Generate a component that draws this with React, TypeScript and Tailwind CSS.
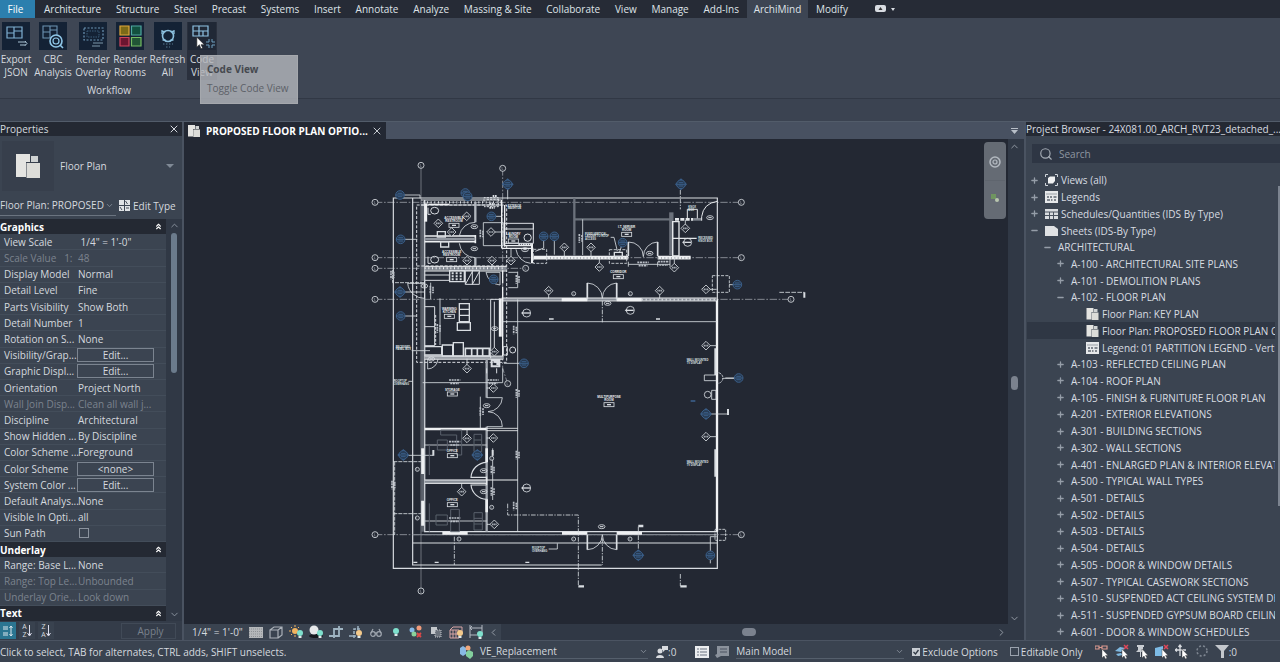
import React from "react";
import { ChevronDown, ChevronUp, ChevronRight, ChevronLeft, ChevronsUp, Search, X, Plus, Minus } from "lucide-react";

const TABS = ["Architecture", "Structure", "Steel", "Precast", "Systems", "Insert", "Annotate", "Analyze", "Massing & Site", "Collaborate", "View", "Manage", "Add-Ins", "ArchiMind", "Modify"];

/* ---------- ribbon ---------- */

function PlanGlyph() {
  return <path d="M5 5h15v11H5zM12 5v11M5 11h7M12 9h8" fill="none" stroke="#7fb0d2" strokeWidth="1.2" />;
}

function ToolIcon({ kind }: { kind: string }) {
  return (
    <svg viewBox="0 0 28 28" className="h-7 w-7" aria-hidden="true">
      <rect width="28" height="28" fill={kind === "code" ? "#202836" : "#142235"} />
      {kind === "export" && (<><PlanGlyph /><path d="M16 20h8M18 23h6M23 19l2 2.500-2 2" fill="none" stroke="#a8c2d4" strokeWidth="1" /></>)}
      {kind === "cbc" && (
        <><path d="M4 4h14v12H4zM11 4v12M4 10h7M11 8h7" fill="none" stroke="#6c93b2" strokeWidth="1.1" /><circle cx="17" cy="19" r="6" fill="#142235" stroke="#8fc7e8" strokeWidth="1.600" /><circle cx="17" cy="19" r="3" fill="none" stroke="#8fc7e8" strokeWidth="1.200" /><path d="M21 23l3 3" stroke="#8fc7e8" strokeWidth="1.600" /></>
      )}
      {kind === "overlay" && (
        <><path d="M5 6h19v12H5z" fill="none" stroke="#6a93b3" strokeWidth="1.200" strokeDasharray="2 1.500" /><path d="M8 9h12v6H8z" fill="none" stroke="#456a88" strokeWidth=".8" strokeDasharray="1.500 1" /><path d="M14 21h10M13 24h8" stroke="#7d97aa" strokeWidth="1" /></>
      )}
      {kind === "rooms" && (
        <g strokeWidth="1.200">
          <path d="M4 4h9v9H4z" fill="#7c6a18" stroke="#e0a73a" /><path d="M15.500 4H25v9h-9.500z" fill="#12503f" stroke="#4fa7a1" />
          <path d="M4 15.500h9V24H4z" fill="#6b1530" stroke="#d0445c" /><path d="M15.500 15.500H25V24h-9.500z" fill="#215536" stroke="#74bb63" />
        </g>
      )}
      {kind === "refresh" && (
        <><circle cx="14" cy="14" r="5.500" fill="none" stroke="#8cc0de" strokeWidth="1.600" /><path d="M7.500 9.500h4M8 8v4M16.500 9.500h4M20 8v4M8.500 18h3M16.500 18h3" fill="none" stroke="#8cc0de" strokeWidth="1.300" /><path d="M9 22h10M12 25h4" stroke="#56788f" strokeDasharray="1.500 1.500" /></>
      )}
      {kind === "code" && (
        <><path d="M5 4h15v10H5zM11 4v10M5 9h15M15 9v5" fill="none" stroke="#8fc3e4" strokeWidth="1.200" /><path d="M18 20h3v-3M27 20h-3v-3M18 23h3v3M27 23h-3v3" fill="none" stroke="#6fa0c0" strokeWidth="1" /></>
      )}
    </svg>
  );
}

const TOOLS: { kind: string; a: string; b: string; cls: string }[] = [
  { kind: "export", a: "Export", b: "JSON", cls: "w-[32px]" },
  { kind: "cbc", a: "CBC", b: "Analysis", cls: "w-[42px]" },
  { kind: "overlay", a: "Render", b: "Overlay", cls: "w-[38px]" },
  { kind: "rooms", a: "Render", b: "Rooms", cls: "w-[36px]" },
  { kind: "refresh", a: "Refresh", b: "All", cls: "w-[39px]" },
  { kind: "code", a: "Code", b: "View", cls: "w-[30px] bg-[#2a303d]" },
];

function Ribbon() {
  return (
    <header className="shrink-0">
      <nav className="flex h-[18px] items-stretch bg-[#262b36] text-[#dfe3e8]">
        <button className="w-[35px] bg-[#2c7fae] pr-1 text-white">File</button>
        <div className="flex w-[820px] justify-between pl-0.5">
          {TABS.map((t) => (
            <button key={t} className={"whitespace-nowrap " + (t === "ArchiMind" ? "bg-[#3d4553] px-[7px]" : "px-[7px]")}>{t}</button>
          ))}
        </div>
        <button className="ml-5 flex items-center gap-1" aria-label="Ribbon display">
          <svg viewBox="0 0 20 8" className="h-2 w-5"><rect x="0" y="0" width="11" height="7" rx="2" fill="#d8dce2" /><path d="M3.500 5L5.500 2l2 3z" fill="#333" /><path d="M16 3h4l-2 3z" fill="#d8dce2" /></svg>
        </button>
      </nav>
      <div className="relative h-[81px] border-b border-[#313845] bg-[#3e4654]">
        <div className="flex items-start pt-1">
          {TOOLS.map((t) => (
            <button key={t.kind} className={"flex h-[58px] flex-col items-center whitespace-nowrap leading-[13px] text-[#d5d9df] " + t.cls}>
              <ToolIcon kind={t.kind} />
              <span className="mt-[3px]">{t.a}</span>
              <span>{t.b}</span>
            </button>
          ))}
        </div>
        <div className="w-[218px] pt-1 text-center leading-[13px] text-[#d5d9df]">Workflow</div>
        <div role="tooltip" className="absolute left-[200px] top-[37px] flex h-[49px] w-[98px] flex-col justify-center gap-[5px] border border-[#a5a8ad] bg-[#b4b7bc]/80 pb-0.5 pl-1.5 leading-[14px] text-[#5d6167]">
          <b className="font-bold text-[#45494f]">Code View</b>
          <span>Toggle Code View</span>
        </div>
        <svg viewBox="0 0 12 16" className="absolute left-[196px] top-[18px] h-[14px] w-[10px]" aria-hidden="true">
          <path d="M1 1v12l3-3 2 5 2-1-2-4h4z" fill="#fff" stroke="#222" strokeWidth=".7" />
        </svg>
      </div>
      <div className="h-[23px] border-b border-[#525c6a] bg-[#3b4351]" />
    </header>
  );
}

/* ---------- properties ---------- */

function SheetIcon({ className }: { className: string }) {
  return (
    <svg viewBox="0 0 24 24" className={className} aria-hidden="true">
      <path d="M0 0h14v8h-4v15H0z" fill="#e4e4e1" /><path d="M15 2h7v6h-7z" fill="#cfd2d2" /><path d="M10.500 9H24v15H10.500z" fill="#dcdcd8" />
    </svg>
  );
}

type Prop = { k: string; v: string; kind?: "head" | "btn" | "off" | "check" };
const PROPS: Prop[] = [
  { k: "Graphics", v: "", kind: "head" },
  { k: "View Scale", v: " 1/4\" = 1'-0\"" },
  { k: "Scale Value   1:", v: "48", kind: "off" },
  { k: "Display Model", v: "Normal" },
  { k: "Detail Level", v: "Fine" },
  { k: "Parts Visibility", v: "Show Both" },
  { k: "Detail Number", v: "1" },
  { k: "Rotation on S...", v: "None" },
  { k: "Visibility/Grap...", v: "Edit...", kind: "btn" },
  { k: "Graphic Displ...", v: "Edit...", kind: "btn" },
  { k: "Orientation", v: "Project North" },
  { k: "Wall Join Disp...", v: "Clean all wall j...", kind: "off" },
  { k: "Discipline", v: "Architectural" },
  { k: "Show Hidden ...", v: "By Discipline" },
  { k: "Color Scheme ...", v: "Foreground" },
  { k: "Color Scheme", v: "<none>", kind: "btn" },
  { k: "System Color ...", v: "Edit...", kind: "btn" },
  { k: "Default Analys...", v: "None" },
  { k: "Visible In Opti...", v: "all" },
  { k: "Sun Path", v: "", kind: "check" },
  { k: "Underlay", v: "", kind: "head" },
  { k: "Range: Base L...", v: "None" },
  { k: "Range: Top Le...", v: "Unbounded", kind: "off" },
  { k: "Underlay Orie...", v: "Look down", kind: "off" },
  { k: "Text", v: "", kind: "head" },
];

function PropRow({ p }: { p: Prop }) {
  if (p.kind === "head") {
    return (
      <div className="flex min-h-0 flex-1 items-center justify-between bg-[#242933] pr-[3px] font-bold text-white">
        <span>{p.k}</span>
        <ChevronsUp size={9} strokeWidth={3} />
      </div>
    );
  }
  return (
    <div className={"flex min-h-0 flex-1 items-center border-b border-[#434d5a] whitespace-pre " + (p.kind === "off" ? "text-[#7b838e]" : "text-[#d5d9df]")}>
      <span className="w-[77px] shrink-0 pl-1">{p.k}</span>
      {p.kind === "btn" ? (
        <button className="h-[14px] w-[77px] border border-[#7b8490] leading-[12px]">{p.v}</button>
      ) : p.kind === "check" ? (
        <input type="checkbox" aria-label={p.k} className="ml-0.5 h-[10px] w-[10px] appearance-none border border-[#8b939e]" />
      ) : (
        <span className="pl-px">{p.v}</span>
      )}
    </div>
  );
}

function Properties() {
  return (
    <aside className="flex w-[184px] shrink-0 flex-col border-r-2 border-[#4a5361] bg-[#343c49] text-[#d5d9df]">
      <div className="flex h-[14px] shrink-0 items-center justify-between bg-[#242933] pr-0.5">
        <h2>Properties</h2>
        <button aria-label="Close properties"><X size={12} /></button>
      </div>
      <button className="flex h-[56px] shrink-0 items-center bg-[#3b4451] pr-2 pt-1 text-left">
        <span className="ml-0.5 flex h-[50px] w-[52px] items-center justify-center bg-[#373f4c]"><SheetIcon className="h-6 w-6" /></span>
        <span className="ml-1.5 flex-1">Floor Plan</span>
        <svg viewBox="0 0 8 4" className="h-1 w-2"><path d="M0 0h8L4 4z" fill="#808a96" /></svg>
      </button>
      <div className="flex h-[27px] shrink-0 items-center bg-[#3b4451]">
        <button className="flex h-5 w-[116px] items-center justify-between border-b border-[#6b7480] pr-0.5">
          <span className="whitespace-nowrap">Floor Plan: PROPOSED</span>
          <ChevronDown size={9} className="text-[#8f98a3]" />
        </button>
        <button className="ml-[3px] flex items-center gap-[3px] whitespace-nowrap">
          <svg viewBox="0 0 11 11" className="h-[11px] w-[11px]"><path d="M0 0h5v5H0zM6 0h5v5H6zM0 6h5v5H0zM6 6h5v5H6z" fill="#dfe2e5" /><path d="M6.500 1l2 3M1 7l2 3M7 8h3" stroke="#444c58" /></svg>
          Edit Type
        </button>
      </div>
      <div className="flex min-h-0 flex-1">
        <div className="flex min-w-0 flex-1 flex-col bg-[#3b4451]">
          {PROPS.map((p) => <PropRow key={p.k + p.v} p={p} />)}
        </div>
        <div className="flex w-4 flex-col items-center justify-between bg-[#303845] py-px text-[#8d96a2]">
          <ChevronUp size={11} />
          <div className="mt-0.5 h-[140px] w-1.5 rounded-full bg-[#6b7b8c]" />
          <div className="flex-1" />
          <ChevronDown size={11} />
        </div>
      </div>
      <div className="flex h-[19px] shrink-0 items-center gap-[3px] pr-1.5">
        <button className="flex h-[17px] w-[16px] items-center justify-center bg-[#2b7591]" aria-label="Group">
          <svg viewBox="0 0 12 12" className="h-3 w-3"><path d="M1 2h5M1 4h5M1 8h5M1 10h5M9 1v10M7.500 3L9 1l1.500 2M7.500 9L9 11l1.500-2" stroke="#dbe7ec" fill="none" /></svg>
        </button>
        {["AZ", "ZA"].map((s) => (
          <button key={s} aria-label={"Sort " + s} className="flex h-[17px] w-4 items-center justify-center bg-[#39424f] leading-[8px]">
            <span className="flex flex-col text-[7px]"><i className="not-italic">{s[0]}</i><i className="not-italic">{s[1]}</i></span>
            <svg viewBox="0 0 5 12" className="h-3 w-[5px]"><path d="M2.500 0v10M.5 8l2 3 2-3" stroke="#dde" fill="none" /></svg>
          </button>
        ))}
        <button className="ml-auto h-4 w-[55px] border border-[#414a57] bg-[#343c49] pl-1 leading-[14px] text-[#79818c]">Apply</button>
      </div>
    </aside>
  );
}

/* ---------- floor plan drawing (three units to the pixel) ---------- */

const W = "#d9dde2";
const G = "#7d838c";
const B = "#3a5e88";

function Bubble({ x, y, r = 9 }: { x: number; y: number; r?: number }) {
  return (<g><circle cx={x} cy={y} r={r} fill="#232833" stroke={W} strokeWidth="2.500" /><path d={`M${x - 2} ${y - 4}v8h4`} stroke={G} strokeWidth="2" fill="none" /></g>);
}
function Diamond({ x, y, to }: { x: number; y: number; to?: string }) {
  return (
    <g fill="none" stroke={W} strokeWidth="2.500">
      {to && <path d={`M${x} ${y}${to}`} />}
      <path d={`M${x - 13} ${y}l13-13 13 13-13 13z`} fill="#232833" />
      <path d={`M${x - 7} ${y}h14`} strokeWidth="5" stroke="#a2a8b0" strokeDasharray="4 1" />
    </g>
  );
}
function Blue({ x, y, arrow, to }: { x: number; y: number; arrow?: boolean; to?: string }) {
  return (
    <g fill="none" stroke={B} strokeWidth="3">
      {to && <path d={`M${x} ${y}${to}`} stroke={W} strokeWidth="2.500" />}
      {arrow && <path d={`M${x - 18} ${y}l18-18 18 18-18 18z`} fill={B} stroke="none" />}
      <circle cx={x} cy={y} r="13" fill="#26384f" />
      <path d={`M${x - 13} ${y}h26M${x - 7} ${y - 5}h14M${x - 7} ${y + 5}h14`} />
    </g>
  );
}
function Room({ x, y, name }: { x: number; y: number; name: string[] }) {
  return (
    <g>
      {name.map((n, i) => <text key={n} x={x} y={y + i * 9} textAnchor="middle" fontSize="9" fontWeight="700" fill="#f0f2f4">{n}</text>)}
      <rect x={x - 15} y={y + name.length * 9 - 5} width="30" height="12" fill="none" stroke={W} strokeWidth="2.500" />
      <path d={`M${x - 6} ${y + name.length * 9 + 1}h12`} stroke={W} strokeWidth="4" />
    </g>
  );
}
function Note({ x, y, lines }: { x: number; y: number; lines: string[] }) {
  return <g>{lines.map((n, i) => <text key={n + i} x={x} y={y + i * 8} fontSize="8" fontWeight="700" fill="#dfe2e6">{n}</text>)}</g>;
}
function Dim({ x, y, v }: { x: number; y: number; v?: boolean }) {
  return v
    ? <path d={`M${x - 4} ${y - 13}v26M${x + 4} ${y - 10}v20`} stroke="#b9bec6" strokeWidth="5" strokeDasharray="6 2" />
    : <path d={`M${x - 16} ${y}h34M${x - 12} ${y + 10}h26`} stroke="#b9bec6" strokeWidth="5" strokeDasharray="6 2" />;
}
function Oval({ x, y }: { x: number; y: number }) {
  return (<g><ellipse cx={x} cy={y} rx="10" ry="6" fill="none" stroke={W} strokeWidth="2.500" /><path d={`M${x - 5} ${y}h10`} stroke={W} strokeWidth="3" /></g>);
}

function FloorPlan() {
  return (
    <svg viewBox="-528 -48 2472 1455" className="h-full w-full" role="img" aria-label="Floor plan" fontFamily="Liberation Sans, sans-serif">
      {/* column grid */}
      <g fill="none" stroke="#969ba3" strokeWidth="2.500" strokeDasharray="22 5 5 5">
        <path d="M45 142H1144M45 308H1144M45 340H497M45 433H1293M45 1139H1144M428 40V640L443 686" />
        <path d="M183 31V1308" strokeDasharray="none" stroke={G} />
      </g>
      {/* roof outline and overhang */}
      <g fill="none" stroke={W} strokeWidth="4">
        <path d="M100 129H1072V1240H100z" strokeWidth="3.500" />
        <path d="M158 129V1230H725M158 1164H1072" strokeWidth="3.500" />
        <path d="M194 135V1130H1072" /><path d="M158 1139H1072" stroke={G} />
        <path d="M104 920V1140M98 345V383H194M100 920H188M100 1076H188" strokeWidth="2.500" strokeDasharray="12 3" />
      </g>
      {/* exterior walls */}
      <path d="M1071 433V1130" stroke="#f0f2f4" strokeWidth="7" />
      <path d="M1066 580V660M1066 883V965" stroke={W} strokeWidth="6" />
      <path d="M188 145V378M188 430V1130" stroke="#5c626c" strokeWidth="9" />
      <path d="M170 150H440V622H170zM170 333H440" fill="none" stroke={W} strokeWidth="3" strokeDasharray="9 5" />
      <path d="M183 135H425M183 150H425" stroke={W} strokeWidth="3" /><path d="M190 142H425" stroke={W} strokeWidth="7" strokeDasharray="3 8" />
      <path d="M188 880V957M188 1037V1112M247 1135H323" stroke="#eef0f2" strokeWidth="9" />
      <path d="M606 1135H682M770 1135H846" stroke="#eef0f2" strokeWidth="9" />
      {/* wall runs */}
      <g stroke="#eef0f2" fill="none">
        <path d="M425 433H1070" stroke="#898f98" strokeWidth="10" /><path d="M425 429H1070M425 438H1070" strokeWidth="2.500" />
        <path d="M845 434H1070" strokeWidth="5" strokeDasharray="3 9" />
        <path d="M605 434H682M770 434H845" strokeWidth="10" />
        <path d="M520 308H805M893 308H992" strokeWidth="11" /><path d="M560 309H805M893 309H992" stroke="#6c727b" strokeWidth="3" strokeDasharray="3 7" />
        <path d="M425 135V280M434 150V275M425 280H520M434 272H515" strokeWidth="4" /><path d="M516 265V325" strokeWidth="6" />
        <path d="M428 340V385M428 395V612" strokeWidth="4" /><path d="M421 430V545" strokeWidth="9" />
        <path d="M197 145V200" strokeWidth="9" /><path d="M205 148H268" strokeWidth="4" />
        <path d="M346 142V202M346 308V340" strokeWidth="7" stroke="#b1b6bd" />
        <path d="M194 243H346M194 260H346M346 240V265" strokeWidth="5" /><path d="M194 252H346" stroke="#8f959e" strokeWidth="7" />
        <path d="M194 340H440" strokeWidth="13" stroke="#858b94" /><path d="M194 334H440M194 348H440" strokeWidth="3" /><path d="M194 340H430" strokeWidth="6" strokeDasharray="3 8" />
        <path d="M194 608H430" strokeWidth="10" stroke="#9a9fa7" /><path d="M194 603H430M194 613H430" strokeWidth="2.500" />
        <path d="M380 612V728M380 815V1130" stroke="#a3a8b0" strokeWidth="7" /><path d="M380 880V922M380 1033V1072" strokeWidth="8" />
        <path d="M194 822H380" strokeWidth="7" /><path d="M380 820H474M380 827H474" strokeWidth="2.500" />
        <path d="M194 980H380" stroke="#878d96" strokeWidth="11" /><path d="M194 975H474M194 985H380M380 965V990" strokeWidth="3" />
      </g>
      <g stroke="#6b717b" fill="none" strokeWidth="7">
        <path d="M643 129V303M643 193H930" /><path d="M934 172V300" strokeWidth="13" />
      </g>
      <g stroke="#e4e7ea" fill="none">
        <path d="M938 200H957V303H938zM938 250H1010" strokeWidth="4" />
        <path d="M945 193H1000" strokeWidth="8" strokeDasharray="12 4" /><path d="M1000 193H1025" stroke={G} strokeWidth="8" />
        <path d="M1025 197V185Q1030 145 1072 139M982 190V163H1012V190" strokeWidth="3" />
      </g>
      {/* doors */}
      <g fill="none" stroke={W} strokeWidth="2.500">
        <path d="M682 433V384A46 46 0 0 1 727 430A46 46 0 0 1 770 384V433" /><path d="M682 433V384M770 384V433M805 303V261M893 303V261M682 1139V1184M770 1139V1184" strokeWidth="5" />
        <path d="M805 261A44 44 0 0 1 850 305A44 44 0 0 1 893 261" />
        <path d="M682 1184A45 45 0 0 0 727 1139A45 45 0 0 0 770 1184" />
        <path d="M346 202A48 48 0 0 0 298 242H346M298 265A48 48 0 0 0 346 308" />
        <path d="M468 283A48 48 0 0 0 512 325M378 352A46 46 0 0 0 420 390V352zM143 385A50 50 0 0 0 194 430M143 385H194" />
        <path d="M380 728H427A44 44 0 0 1 384 770A44 44 0 0 1 427 815H380M361 725V820" />
        <path d="M380 922A48 48 0 0 0 333 967H380M380 1033A48 48 0 0 1 333 990H380" strokeWidth="3.500" />
        <path d="M203 612V642A32 32 0 0 0 234 612" />
      </g>
      {/* dimension strings */}
      <g fill="none" stroke={W} strokeWidth="2.500">
        <path d="M428 500H1070M473 433V1130M188 683H428M428 683V640M194 870H380M194 1098H380M240 430V570M370 203H430V272H370zM668 193V300M805 328H930M805 320V335M893 320V335M930 308V335M398 880V1035M212 383V432M473 350V398M445 352H473M445 398H473" />
        <path d="M727 438V502M961 105V163M443 1046V1080H655V1293M283 1145V1230M727 1150V1230M961 1257V1293M835 1115V1190" strokeDasharray="14 4 4 4" />
        <path d="M655 1294H672M961 1294H980M835 1113H850" strokeWidth="7" />
        <path d="M1258 412H1333" strokeDasharray="14 4" /><path d="M1333 412V428M1104 762V780M220 885V902M398 885V902" strokeWidth="6" />
        <path d="M1038 777H1104M125 901H220" /><path d="M1057 362H1108V412H1057zM748 284H800V325H748zM520 283H560V325H520z" strokeDasharray="9 4" />
        <path d="M1065 1123H1097V1156H1065zM1065 655A16 16 0 1 1 1072 685" strokeDasharray="8 3" />
        <path d="M1051 1225V1145H1070M592 1165V1182H566M145 679H158M155 587H210M1087 670H1123M1033 660V677H1068M1033 660H1068M1055 706H1068V733H1055z" /><circle cx="1043" cy="719" r="10" />
      </g>
      {/* fixtures and casework */}
      <g fill="none" stroke={W} strokeWidth="3">
        <ellipse cx="224" cy="167" rx="12" ry="10" /><ellipse cx="224" cy="314" rx="12" ry="10" /><path d="M204 158V178H212M204 305V325H212" />
        <path d="M232 230H256V246H232zM242 260H266V276H242z" strokeWidth="4" />
        <path d="M194 360H268V376H194M316 346H358V388H316zM337 346V388M316 388L337 350M337 388L358 350" />
        <path d="M269 347H313V380H269z" strokeWidth="4" /><path d="M278 352V376M290 352V376M302 352V376" strokeWidth="6" strokeDasharray="6 3" />
        <path d="M298 446H328V500H298zM298 463H328M298 481H328M292 503H331V526H292z" strokeWidth="4" />
        <path d="M194 455H224V572H194M194 515H224M392 433H420M392 433V610M403 440V600" /><path d="M227 480V570" strokeDasharray="8 4" />
        <path d="M194 575H245V600H194M247 570H278V603H247zM280 563H310V603H280z" strokeWidth="4" /><path d="M316 580H388V603H316zM335 580V603M352 580V603M368 580V603" strokeWidth="5" />
        <path d="M395 615H418V634H395zM400 620H412V630" strokeWidth="6" /><circle cx="458" cy="585" r="9" /><path d="M380 640V655M410 640V655M430 575H442V600H430z" />
        <path d="M435 205H520V265H435M435 222H520V205" /><circle cx="503" cy="248" r="11" /><path d="M372 140V128H415V155H372M380 133H420" strokeDasharray="7 3" />
        <path d="M388 147H404M388 158H404M475 268H515M398 123H412" strokeWidth="6" strokeDasharray="5 2" />
      </g>
      {/* furniture below */}
      <g fill="none" stroke="#59606b" strokeWidth="3">
        <path d="M242 825H305V900H290V840H242zM232 855H262V885H232zM342 838H365V890H342zM342 855H365M342 872H365M208 870V960" />
        <path d="M298 1063H272V1130H298zM228 1080H262V1110H228zM342 1073H367V1125H342zM342 1090H367M342 1107H367M208 1045V1130" />
      </g>
      {/* tags */}
      {[[45, 142], [1144, 142], [45, 308], [1144, 308], [45, 340], [497, 340], [45, 433], [1293, 433], [45, 1139], [1144, 1139], [183, 31], [428, 40], [183, 1308], [443, 686]].map(([x, y]) => <Bubble key={`${x},${y}`} x={x} y={y} />)}
      {([[235, 205], [320, 184], [275, 231], [321, 317, "v25"], [396, 317, "v25"], [453, 317, "v-35"], [393, 231, "h40"], [613, 277, "v28"], [693, 277, "v28"], [718, 336, "v-25"], [943, 338, "v-28"], [976, 220, "v-25"], [566, 407, "v24"], [899, 407, "v24"], [1038, 403, "h32"], [1038, 572, "h32"], [1038, 845, "h32"], [321, 641, "v-30"], [400, 699, "h-20"], [321, 850, "v-26"], [400, 849, "h-20"], [305, 1010, "v-26"], [403, 1108, "h-22"], [403, 590]] as [number, number, string?][]).map(([x, y, to]) => <Diamond key={`${x},${y}`} x={x} y={y} to={to} />)}
      {([[120, 120, false, "h60v10"], [122, 253, false, "h50"], [122, 483, false, "h48"], [120, 411, true, "h75"], [316, 114], [323, 124], [394, 184, false, "h30"], [443, 88, true, "v45"], [551, 244, false, "v35l-25 10"], [583, 244, false, "v55"], [788, 263, false, "l-10 30"], [963, 88, true], [1132, 389, false, "h-25"], [492, 625, false, "h-60"], [1136, 669, false, "h-40"], [1038, 777, true], [130, 900, true], [352, 900, true], [835, 1201, true], [1051, 1201], [401, 373]] as [number, number, boolean?, string?][]).map(([x, y, a, to]) => <Blue key={`${x},${y}`} x={x} y={y} arrow={a} to={to} />)}
      {[[343, 215], [343, 281], [495, 284], [1050, 188], [869, 295], [743, 445], [725, 1115], [380, 752], [371, 947], [371, 1010], [193, 393], [214, 612], [404, 521]].map(([x, y]) => <Oval key={`${x},${y}`} x={x} y={y} />)}
      {[[172, 943], [172, 1089], [297, 1152], [641, 1152], [810, 1152], [641, 416], [811, 416], [395, 910], [395, 1057]].map(([x, y]) => <Bubble key={`${x},${y}`} x={x} y={y} r={6} />)}
      {[[500, 474], [500, 999], [811, 466], [983, 262]].map(([x, y]) => (
        <g key={`${x},${y}`}><circle cx={x} cy={y} r="12" fill="none" stroke={W} strokeWidth="2.500" /><path d={`M${x - 10} ${y}h20`} stroke={W} strokeWidth="4" /><path d={`M${x - 17} ${y}l7-5v10z`} fill={W} /></g>
      ))}
      {[[283, 675], [283, 860], [283, 1089], [398, 675], [848, 322], [910, 320]].map(([x, y]) => <Dim key={`${x},${y}`} x={x} y={y} />)}
      {[[365, 237], [215, 405], [473, 373], [236, 520], [465, 525], [365, 770], [473, 715], [473, 900], [465, 1053], [398, 945], [398, 1010], [97, 360], [100, 990], [662, 250]].map(([x, y]) => <Dim key={`${x},${y}`} x={x} y={y} v />)}
      <path d="M567 492h14M888 492h12M160 1222h12M224 1222h12M496 1222h12" stroke={W} strokeWidth="4" />
      <Room x={282} y={192} name={["ACCESSIBLE", "RESTROOM"]} />
      <Room x={275} y={295} name={["ACCESSIBLE", "RESTROOM"]} />
      <Room x={268} y={465} name={["WARMING", "KITCHEN"]} />
      <Room x={460} y={239} name={["LAUNDRY", "ROOM"]} />
      <Room x={800} y={219} name={["I.T. SERVER", "ROOM"]} />
      <Room x={775} y={355} name={["CORRIDOR"]} />
      <Room x={277} y={707} name={["STORAGE"]} />
      <Room x={277} y={892} name={["OFFICE"]} />
      <Room x={277} y={1039} name={["OFFICE"]} />
      <Room x={747} y={730} name={["MULTIPURPOSE", "ROOM"]} />
      <Note x={675} y={239} lines={["FIXED VERTICAL", "LADDER TO ROOF", "ACCESS"]} />
      <Note x={1015} y={253} lines={["RECESSED", "KNOX BOX"]} />
      <Note x={985} y={160} lines={["KNOX", "BOX"]} />
      <Note x={443} y={155} lines={["EXTERIOR", "WASHTUB"]} />
      <Note x={980} y={618} lines={["WALL MOUNTED", "TV DISPLAY"]} />
      <Note x={980} y={925} lines={["WALL MOUNTED", "TV DISPLAY"]} />
      <Note x={107} y={578} lines={["RECESSED", "PANEL BOX"]} />
      <Note x={101} y={682} lines={["ROOFTOP", "OVERHANG"]} />
      <Note x={516} y={1183} lines={["ROOFTOP", "OVERHANG"]} />
      <path d="M752 247H762L772 288" fill="none" stroke={W} strokeWidth="2.500" />
      <path d="M763 292h24v12h-24z" fill="none" stroke={W} strokeWidth="4" />
      <path d="M992 738h14" stroke={B} strokeWidth="5" />
    </svg>
  );
}

/* ---------- view area ---------- */

function Bulb({ x, y, c }: { x: number; y: number; c: string }) {
  return (<g><circle cx={x} cy={y} r="3" fill={c} /><path d={`M${x - 1.5} ${y + 3}h3v2h-3z`} fill="#dfe9e8" /></g>);
}
const MINT = "#7fe0cd";
const AMBER = "#f3c98b";
const VIEW_ICONS: { label: string; art: React.ReactNode }[] = [
  { label: "Detail level", art: <><rect x="0" y="2" width="14" height="11" fill="#b4b7ba" /><path d="M0 4h14M0 6.500h14M0 9h14M0 11.500h14" stroke="#8d9195" strokeDasharray="1 1" /></> },
  { label: "Visual style", art: <path d="M1 5h8v8H1zM1 5l4-3h8v8l-4 3M9 5l4-3" fill="none" stroke="#aab0b8" strokeWidth="1.200" /> },
  { label: "Sun path", art: <><circle cx="6" cy="6" r="3" fill="#f0b35f" /><path d="M6 0v2M0 6h2M2 2l1 1M2 10l1-1M10 2l-1 1M6 10v2" stroke="#f0b35f" /><Bulb x={11} y={8} c={MINT} /></> },
  { label: "Shadows", art: <><ellipse cx="7" cy="11" rx="7" ry="2" fill="#15181e" /><circle cx="5" cy="5" r="4.500" fill="#e6e8ea" /><Bulb x={11} y={8} c={MINT} /></> },
  { label: "Crop view", art: <><path d="M5 13V4h9" fill="none" stroke="#9fb4c2" strokeWidth="1.800" /><path d="M0 11h10V1" fill="none" stroke="#9fb4c2" strokeWidth="1.800" /></> },
  { label: "Show crop region", art: <><path d="M5 13V4h7" fill="none" stroke="#9fb4c2" strokeWidth="1.500" strokeDasharray="3 1" /><path d="M0 11h7M9 1v4" fill="none" stroke="#9fb4c2" strokeWidth="1.500" /><Bulb x={10} y={8} c={AMBER} /></> },
  { label: "Temporary hide", art: <g fill="none" stroke="#a0a7b0" strokeWidth="1.200"><circle cx="4" cy="9" r="2.300" /><circle cx="10" cy="9" r="2.300" /><path d="M2 8l2-4M12 8l-2-4M6 8h2" /></g> },
  { label: "Reveal hidden elements", art: <Bulb x={7} y={6} c={MINT} /> },
  { label: "Worksharing display", art: <><circle cx="3" cy="5" r="2.500" fill="#85b9e6" /><circle cx="10" cy="3" r="2.500" fill="#ef9b7b" /><circle cx="5" cy="9" r="2.500" fill="#8ad29b" /><path d="M8 8l4 4M12 8l-4 4" stroke="#e04848" strokeWidth="1.800" /></> },
  { label: "Temporary view properties", art: <><path d="M2 2h6v7H2z" fill="#c4c8cc" /><path d="M6 5h6v7H6z" fill="#6c737d" stroke="#c4c8cc" strokeDasharray="1 1" /></> },
  { label: "Analytical model", art: <><path d="M1 5h9v8H1zM1 5l3-3h9v7M4 5v8M7 5v8M1 9h9" fill="none" stroke="#d8a6a6" /><Bulb x={11} y={8} c={AMBER} /></> },
  { label: "Reveal constraints", art: <><path d="M1 0v13M13 0v8M1 3h12M3 1L1 3l2 2M1 10h7" fill="none" stroke="#b4bac2" /><Bulb x={11} y={9} c={MINT} /></> },
];

function ViewArea() {
  return (
    <main className="flex min-w-0 flex-1 flex-col bg-[#303845]">
      <div className="flex h-[17px] shrink-0 items-center justify-between bg-[#485161]">
        <div className="flex h-full w-[202px] items-center bg-[#232833] pl-1 font-bold text-white">
          <SheetIcon className="h-3 w-3" />
          <span className="ml-1.5 flex-1 whitespace-nowrap">PROPOSED FLOOR PLAN OPTIO...</span>
          <button aria-label="Close view" className="mr-[3px] text-[#c4c9d0]"><X size={12} /></button>
        </div>
        <button aria-label="View list" className="mr-1.5"><svg viewBox="0 0 7 6" className="h-1.5 w-[7px]"><path d="M0 0h7v1H0zM0 2h7L3.500 6z" fill="#b8bfc8" /></svg></button>
      </div>
      <div className="flex min-h-0 flex-1">
        <div className="relative min-w-0 flex-1 bg-[#232833]">
          <FloorPlan />
          <div className="absolute right-0.5 top-[3px] flex h-[77px] w-[22px] flex-col items-center gap-3 rounded-sm bg-[#656b74] pt-3.5">
            <svg viewBox="0 0 12 12" className="h-3 w-3"><circle cx="6" cy="6" r="5" fill="none" stroke="#b3b9c0" strokeWidth="1.500" /><circle cx="6" cy="6" r="2" fill="none" stroke="#b3b9c0" strokeWidth="1.200" /></svg>
            <span className="h-px w-5 bg-[#5f656e]" />
            <svg viewBox="0 0 10 10" className="h-2.5 w-2.5"><path d="M1 1h5v5H1z" fill="#6f9560" /><circle cx="7" cy="7" r="2" fill="#b9c6ae" /></svg>
          </div>
        </div>
        <div className="flex w-3 shrink-0 flex-col items-center text-[#9aa2ac]">
          <ChevronUp size={11} className="mt-0.5" />
          <div className="flex-1" />
          <div className="h-3.5 w-[7px] rounded bg-[#7b828e]" />
          <div className="flex-1" />
          <ChevronDown size={11} />
        </div>
        <div className="w-1 bg-[#303845]" />
      </div>
      <div className="flex h-4 shrink-0 items-center text-[#9aa2ac]">
        <div className="flex h-full items-center bg-[#3a4350] pl-2">
          <span className="w-[54px] text-[#d5d9df]">1/4" = 1'-0"</span>
          {VIEW_ICONS.map((v) => (
            <button key={v.label} aria-label={v.label} className="flex w-5 justify-center"><svg viewBox="0 0 14 14" className="h-3.5 w-3.5">{v.art}</svg></button>
          ))}
          <ChevronLeft size={11} className="mx-0.5" />
        </div>
        <div className="flex flex-1 items-center">
          <div className="flex-1" />
          <div className="h-2 w-[14px] rounded bg-[#7b828e]" />
          <div className="flex-1" />
        </div>
        <ChevronRight size={11} className="mr-[17px]" />
      </div>
    </main>
  );
}

/* ---------- project browser ---------- */

type Node = { t: string; d: number; s?: "+" | "-"; icon?: string; on?: boolean };
const TREE: Node[] = [
  { t: "Views (all)", d: 0, s: "+", icon: "views" },
  { t: "Legends", d: 0, s: "+", icon: "legend" },
  { t: "Schedules/Quantities (IDS By Type)", d: 0, s: "+", icon: "table" },
  { t: "Sheets (IDS-By Type)", d: 0, s: "-", icon: "sheets" },
  { t: "ARCHITECTURAL", d: 1, s: "-" },
  { t: "A-100 - ARCHITECTURAL SITE PLANS", d: 2, s: "+" },
  { t: "A-101 - DEMOLITION PLANS", d: 2, s: "+" },
  { t: "A-102 - FLOOR PLAN", d: 2, s: "-" },
  { t: "Floor Plan: KEY PLAN", d: 3, icon: "plan" },
  { t: "Floor Plan: PROPOSED FLOOR PLAN O", d: 3, icon: "plan", on: true },
  { t: "Legend: 01 PARTITION LEGEND - Vertic", d: 3, icon: "legend" },
  ...["103 - REFLECTED CEILING PLAN", "104 - ROOF PLAN", "105 - FINISH & FURNITURE FLOOR PLAN", "201 - EXTERIOR ELEVATIONS", "301 - BUILDING SECTIONS", "302 - WALL SECTIONS", "401 - ENLARGED PLAN & INTERIOR ELEVAT", "500 - TYPICAL WALL TYPES", "501 - DETAILS", "502 - DETAILS", "503 - DETAILS", "504 - DETAILS", "505 - DOOR & WINDOW DETAILS", "507 - TYPICAL CASEWORK SECTIONS", "510 - SUSPENDED ACT CEILING SYSTEM DE", "511 - SUSPENDED GYPSUM BOARD CEILIN", "601 - DOOR & WINDOW SCHEDULES"].map((t): Node => ({ t: "A-" + t, d: 2, s: "+" })),
];
const INDENT = ["pl-[3px]", "pl-4", "pl-[29px]", "pl-[59px]"];

function NodeIcon({ kind }: { kind: string }) {
  if (kind === "plan") return <SheetIcon className="h-3 w-[13px] shrink-0" />;
  return (
    <svg viewBox="0 0 13 12" className="h-3 w-[13px] shrink-0" aria-hidden="true">
      {kind === "views" && <><path d="M.5 3V.5H3M10 .5h2.500V3M12.500 9v2.500H10M3 11.500H.5V9" fill="none" stroke="#cfd4da" /><path d="M3 4l2-1.500h5V7L8 9.500H3z" fill="#f0f1f2" /></>}
      {kind === "legend" && <><path d="M0 0h13v12H0z" fill="#e6e8ea" /><path d="M1 3h11" stroke="#9aa0a6" /><path d="M2 6h2M5 6h2M8.500 6h3M2 9h3M6 9h1.500M9 9h2" stroke="#5f6670" strokeWidth="1.500" /></>}
      {kind === "table" && <><path d="M0 1h13v10H0z" fill="#d9dcdf" /><path d="M0 4h13M0 7.500h13M4.500 4v7M8.500 4v7" stroke="#4a525e" /></>}
      {kind === "sheets" && <path d="M0 1h9l4 3v7H0z" fill="#dfe1e3" />}
    </svg>
  );
}

function ProjectBrowser() {
  return (
    <aside className="flex w-64 shrink-0 flex-col border-l-2 border-[#4a5361] bg-[#3b4451] text-[#d8dce1]">
      <h2 className="h-[14px] shrink-0 whitespace-nowrap bg-[#242933] leading-[14px]">Project Browser - 24X081.00_ARCH_RVT23_detached_...</h2>
      <label className="mb-[9px] ml-1.5 mt-2 flex h-[19px] shrink-0 items-center bg-[#2e3644] pl-[7px]">
        <Search size={14} className="text-[#a5acb5]" />
        <input placeholder="Search" aria-label="Search" className="ml-1.5 min-w-0 flex-1 bg-transparent outline-none placeholder:text-[#8e96a1]" />
      </label>
      <div className="flex min-h-0 flex-1">
        <ul className="flex min-w-0 flex-1 flex-col pl-px">
          {TREE.map((n) => (
            <li key={n.t} className={"flex min-h-0 flex-1 items-center overflow-hidden whitespace-nowrap " + INDENT[n.d] + (n.on ? " bg-[#2f3744]" : "")}>
              {n.s === "+" && <Plus size={9} strokeWidth={3.500} className="shrink-0 text-[#959da8]" />}
              {n.s === "-" && <Minus size={9} strokeWidth={3.500} className="shrink-0 text-[#959da8]" />}
              {n.icon ? <span className={"mr-[3px] flex shrink-0 " + (n.d === 0 ? "ml-1.5" : "")}><NodeIcon kind={n.icon} /></span> : <span className="w-1.5 shrink-0" />}
              <span>{n.t}</span>
            </li>
          ))}
        </ul>
        <div className="flex w-[5px] flex-col items-end">
          <div className="mt-3.5 h-[320px] w-0.5 bg-[#7c8490]" />
        </div>
      </div>
    </aside>
  );
}

/* ---------- status bar ---------- */

const ARROW = <path d="M7 5v9l2-2 1.500 3 1.500-1-1.500-2.500H13z" fill="#fff" stroke="#333" strokeWidth=".4" />;
const SELECTORS: { label: string; art: React.ReactNode }[] = [
  { label: "Select links", art: <><path d="M0 2h4v3H0zM7 2h5v3H7zM4 3.500h3" fill="none" stroke="#dc9a90" strokeWidth="1.200" />{ARROW}</> },
  { label: "Select underlay elements", art: <><path d="M0 7l5-4 5 1-4 4zM1 10l5-1 2 2-5 1z" fill="#7fb8e0" />{ARROW}<path d="M9 1l4 4M13 1L9 5" stroke="#e0485a" strokeWidth="1.500" /></> },
  { label: "Select pinned elements", art: <><path d="M2 1h7v2H8v3l2 2H1l2-2V3H2zM5 8h1v5H5z" fill="#c9cdd2" />{ARROW}</> },
  { label: "Select elements by face", art: <><path d="M0 4l8-2v10H0z" fill="#7dbbe6" />{ARROW}<path d="M9 1l4 4M13 1L9 5" stroke="#e0485a" strokeWidth="1.500" /></> },
  { label: "Drag elements on selection", art: <><path d="M5 1v11M0 6h11M3.500 3L5 1l1.500 2M2 4.500L0 6l2 1.500" fill="none" stroke="#d7dadf" strokeWidth="1.300" />{ARROW}</> },
  { label: "Background processes", art: <circle cx="7" cy="7" r="5" fill="none" stroke="#7d8590" strokeWidth="1.500" strokeDasharray="2 2" /> },
  { label: "Filter", art: <path d="M0 1h14L9 7v7H6V7z" fill="#c3c7cc" /> },
];

function StatusBar() {
  return (
    <footer className="flex h-[22px] shrink-0 items-center border-t border-[#4b5462] bg-[#3a4350] text-[#d5d9df]">
      <span className="flex-[460] basis-0 whitespace-nowrap">Click to select, TAB for alternates, CTRL adds, SHIFT unselects.</span>
      <div className="flex flex-[820] basis-0 items-center whitespace-nowrap">
        <svg viewBox="0 0 14 14" className="h-3.5 w-3.5"><path d="M0 3l3-2 3 2v6l-3 2-3-2z" fill="#89b9e4" /><circle cx="8" cy="3" r="2.500" fill="#efa77b" /><path d="M6 7l3-2 4 2v4l-3 3-4-3z" fill="#82cf9d" /></svg>
        <button className="ml-1.5 flex w-[168px] items-center justify-between border-b border-[#555f6c]">VE_Replacement<ChevronDown size={9} className="text-[#949ca7]" /></button>
        <svg viewBox="0 0 12 14" className="ml-2 h-3.5 w-3"><circle cx="4" cy="6" r="2.500" fill="#d9dce0" /><path d="M0 13c0-4 8-4 8 0zM6 1h6v4H9L7 7V5H6z" fill="#d9dce0" /></svg>
        <span>:0</span>
        <svg viewBox="0 0 14 12" className="ml-[19px] h-3 w-3.5"><path d="M0 0h14v12H0z" fill="#eceef0" /><path d="M2 3h2M2 6h2M2 9h2M5 3h7M5 6h7M5 9h7" stroke="#6b7280" /></svg>
        <svg viewBox="0 0 14 12" className="ml-1.5 h-3 w-3.5"><path d="M2 0h12v10H6l-4 2-2-3 2-1z" fill="#8b929c" /><path d="M5 3h7M5 6h7" stroke="#4b5260" /></svg>
        <button className="ml-[7px] flex w-[168px] items-center justify-between border-b border-[#555f6c]">Main Model<ChevronDown size={9} className="text-[#949ca7]" /></button>
        <label className="ml-2 flex items-center gap-0.5">
          <span className="relative flex"><input type="checkbox" defaultChecked className="h-2 w-2 appearance-none bg-[#c7ccd2]" /><svg viewBox="0 0 8 8" className="pointer-events-none absolute h-2 w-2"><path d="M1.500 4l2 2 3-4" stroke="#303844" strokeWidth="1.300" fill="none" /></svg></span>
          Exclude Options
        </label>
        <label className="ml-3 flex items-center gap-0.5">
          <input type="checkbox" className="h-[9px] w-[9px] appearance-none border border-[#9aa2ad]" />
          Editable Only
        </label>
        <div className="ml-auto mr-[43px] flex items-center gap-1.5">
          {SELECTORS.map((s) => (
            <button key={s.label} aria-label={s.label}><svg viewBox="0 0 14 16" className="h-4 w-3.5">{s.art}</svg></button>
          ))}
          <span className="-ml-1.5">:0</span>
        </div>
      </div>
    </footer>
  );
}

export default function App() {
  return (
    <div className="flex h-screen flex-col overflow-hidden bg-[#3b4351] font-['Open_Sans','Noto_Sans',sans-serif] text-[10px] leading-[14px]">
      <Ribbon />
      <div className="flex min-h-0 flex-1">
        <Properties />
        <ViewArea />
        <ProjectBrowser />
      </div>
      <StatusBar />
    </div>
  );
}
